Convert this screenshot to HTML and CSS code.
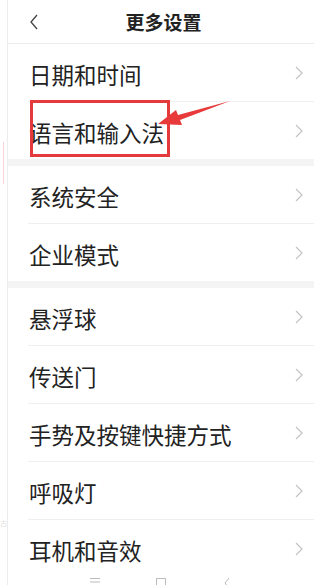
FILE: index.html
```html
<!DOCTYPE html>
<html lang="zh-CN">
<head>
<meta charset="utf-8">
<title>更多设置</title>
<link rel="stylesheet" href="styles.css">
</head>
<body>
<div class="frame">
  <div class="side">
    <span class="side-mark"></span>
    <span class="side-char">古</span>
  </div>
  <div class="screen">
    <header class="topbar">
      <svg class="back" width="10" height="16" viewBox="0 0 10 16"><polyline points="8,1 2,8 8,15" fill="none" stroke="#444" stroke-width="1.3"/></svg>
      <h1 class="title">更多设置</h1>
    </header>

    <section class="group">
      <div class="row"><span class="label">日期和时间</span><svg class="chev" width="8" height="14" viewBox="0 0 8 14"><polyline points="1,1 7,7 1,13" fill="none" stroke="#c4c4c4" stroke-width="1.2"/></svg></div>
      <div class="row"><span class="label">语言和输入法</span><svg class="chev" width="8" height="14" viewBox="0 0 8 14"><polyline points="1,1 7,7 1,13" fill="none" stroke="#c4c4c4" stroke-width="1.2"/></svg></div>
    </section>

    <section class="group">
      <div class="row"><span class="label">系统安全</span><svg class="chev" width="8" height="14" viewBox="0 0 8 14"><polyline points="1,1 7,7 1,13" fill="none" stroke="#c4c4c4" stroke-width="1.2"/></svg></div>
      <div class="row"><span class="label">企业模式</span><svg class="chev" width="8" height="14" viewBox="0 0 8 14"><polyline points="1,1 7,7 1,13" fill="none" stroke="#c4c4c4" stroke-width="1.2"/></svg></div>
    </section>

    <section class="group">
      <div class="row"><span class="label">悬浮球</span><svg class="chev" width="8" height="14" viewBox="0 0 8 14"><polyline points="1,1 7,7 1,13" fill="none" stroke="#c4c4c4" stroke-width="1.2"/></svg></div>
      <div class="row"><span class="label">传送门</span><svg class="chev" width="8" height="14" viewBox="0 0 8 14"><polyline points="1,1 7,7 1,13" fill="none" stroke="#c4c4c4" stroke-width="1.2"/></svg></div>
      <div class="row"><span class="label">手势及按键快捷方式</span><svg class="chev" width="8" height="14" viewBox="0 0 8 14"><polyline points="1,1 7,7 1,13" fill="none" stroke="#c4c4c4" stroke-width="1.2"/></svg></div>
      <div class="row"><span class="label">呼吸灯</span><svg class="chev" width="8" height="14" viewBox="0 0 8 14"><polyline points="1,1 7,7 1,13" fill="none" stroke="#c4c4c4" stroke-width="1.2"/></svg></div>
      <div class="row"><span class="label">耳机和音效</span><svg class="chev" width="8" height="14" viewBox="0 0 8 14"><polyline points="1,1 7,7 1,13" fill="none" stroke="#c4c4c4" stroke-width="1.2"/></svg></div>
    </section>

    <nav class="navbar">
      <svg width="12" height="10" viewBox="0 0 12 10"><path d="M1 1.5H11M1 5H11" stroke="#bbb" stroke-width="1"/></svg>
      <svg width="12" height="10" viewBox="0 0 12 10"><path d="M1.5 10V1.5H10.5V10" fill="none" stroke="#bbb" stroke-width="1"/></svg>
      <svg width="12" height="10" viewBox="0 0 12 10"><polyline points="8,1 4,6 8,11" fill="none" stroke="#bbb" stroke-width="1"/></svg>
    </nav>
  </div>

  <div class="annot">
    <div class="annot-box"></div>
    <svg class="annot-arrow" width="314" height="585" viewBox="0 0 314 585">
      <polygon points="158,124 176,110 178,115 230,101 180,120 182,125" fill="#e8393b"/>
    </svg>
  </div>
</div>
</body>
</html>
```

FILE: styles.css
```css
* { box-sizing: border-box; }
html, body { margin: 0; padding: 0; background: #fff; }
body {
  font-family: "Noto Sans CJK SC", "Noto Sans", sans-serif;
  color: #222;
  width: 314px;
  height: 585px;
  overflow: hidden;
}
.frame {
  position: relative;
  display: flex;
  width: 314px;
  min-height: 585px;
}
.side {
  position: relative;
  width: 8px;
  flex: none;
  border-right: 1px solid #ececec;
  background: #fff;
}
.side-mark {
  position: absolute;
  left: 3px;
  top: 142px;
  width: 1px;
  height: 42px;
  background: #f6d6da;
}
.side-char {
  position: absolute;
  left: 0;
  top: 520px;
  font-size: 7px;
  line-height: 1;
  color: #e2e2e2;
}
.screen {
  flex: 1;
  display: flex;
  flex-direction: column;
  background: #f4f4f4;
}
.topbar {
  height: 44px;
  display: flex;
  align-items: center;
  justify-content: center;
  position: relative;
  background: #fff;
  border-bottom: 1px solid #ebebeb;
}
.back {
  position: absolute;
  left: 21px;
  top: 14px;
}
.title {
  margin: 0 0 0 5px;
  font-size: 19px;
  font-weight: 700;
  color: #222;
  letter-spacing: 0;
}
.group {
  background: #fff;
  margin-bottom: 7px;
}
.group:last-of-type { margin-bottom: 0; }
.row {
  height: 58px;
  margin-left: 20px;
  padding-left: 1px;
  padding-right: 11px;
  display: flex;
  align-items: center;
  justify-content: space-between;
  border-bottom: 1px solid #efefef;
}
.row:last-child {
  height: 57px;
  border-bottom: none;
}
.label {
  font-size: 22.5px;
  line-height: 1;
  padding-top: 3px;
  color: #222;
}
.chev { flex: none; }
.navbar {
  height: 30px;
  background: #fff;
  display: flex;
  justify-content: center;
  align-items: flex-start;
  gap: 54px;
  padding-top: 0;
}
.annot-box {
  position: absolute;
  left: 30px;
  top: 100px;
  width: 140px;
  height: 57px;
  border: 3px solid #e53a3c;
}
.annot-arrow {
  position: absolute;
  left: 0;
  top: 0;
  pointer-events: none;
}
```
